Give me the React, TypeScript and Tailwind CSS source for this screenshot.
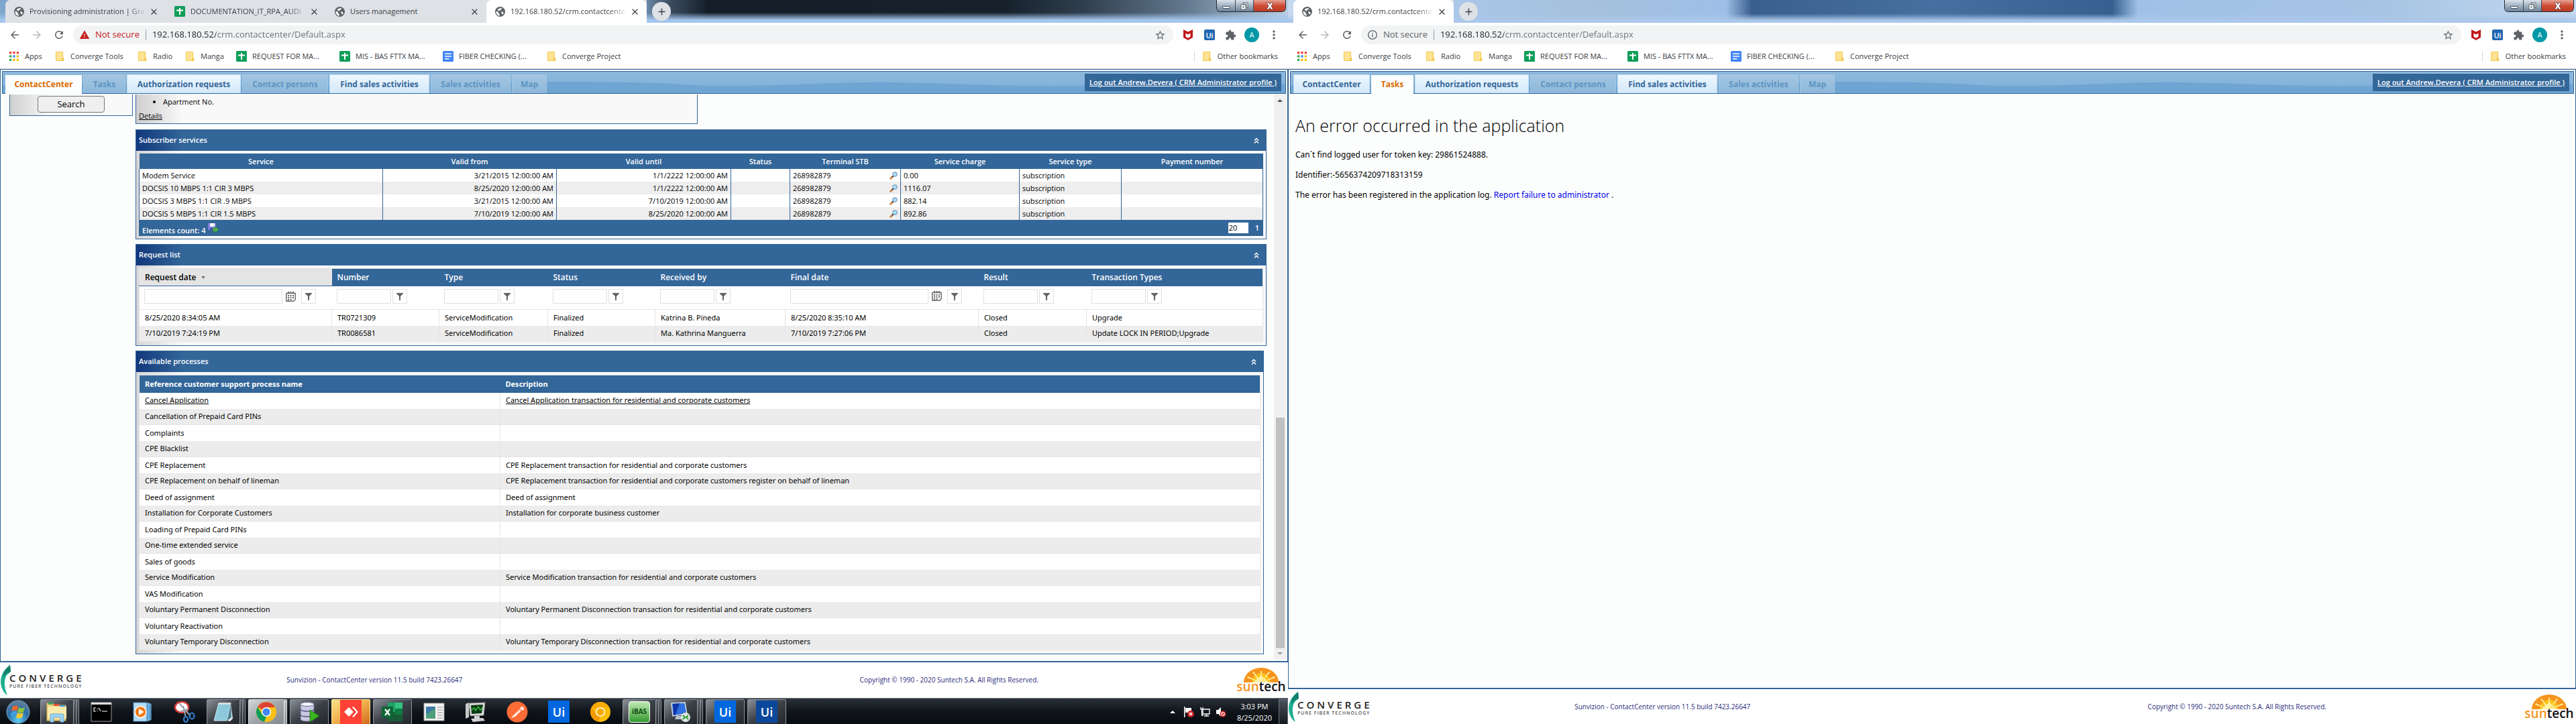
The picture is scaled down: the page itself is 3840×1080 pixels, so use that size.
import type { ReactNode } from "react";

/* ---------- icons ---------- */

type IconProps = { className?: string };

const Svg = ({ className = "", box = "0 0 24 24", children }: IconProps & { box?: string; children: ReactNode }) => (
  <svg viewBox={box} className={`shrink-0 ${className}`} aria-hidden="true">
    {children}
  </svg>
);

const GlobeIcon = ({ className }: IconProps) => (
  <Svg className={className} box="2 2 20 20">
    <circle cx="12" cy="12" r="10" fill="#5f6368" />
    <path
      fill="#fff"
      d="M4.500 10.500L9 13v2.500l2 1.500v3.200C7 19.500 4 16.300 4 12.300zM9.500 5.500L15 4.500l.5 2-2.500 1.300-1 2.200H8.500L7 8zM14 11.500l3 .5 2 2.500-1.500 2.700L15.500 16z"
    />
  </Svg>
);

const SheetsIcon = ({ className }: IconProps) => (
  <Svg className={className} box="0 0 16 16">
    <rect width="16" height="16" rx="1.5" fill="#0f9d58" />
    <path fill="#fff" d="M7 3h2v2.500h4v2H9V13H7V7.500H3v-2h4z" />
  </Svg>
);

const DocsIcon = ({ className }: IconProps) => (
  <Svg className={className} box="0 0 16 16">
    <rect width="16" height="16" rx="1.5" fill="#4285f4" />
    <path fill="#fff" d="M3 3.500h10v1.500H3zM3 7.200h10v1.500H3zM3 11h6.500v1.500H3z" />
  </Svg>
);

const FolderIcon = ({ className }: IconProps) => (
  <Svg className={className} box="0 0 16 16">
    <path d="M2.500 1.500h10v8.500l1.200.8v3.700H2.500z" fill="#ffe394" stroke="#f2c94c" />
    <path d="M11.500 14.500v-4l1-1 1.200 1.300v3.700z" fill="#ffd75e" stroke="#e8b83a" strokeWidth=".7" />
  </Svg>
);

const AppsIcon = ({ className }: IconProps) => (
  <Svg className={className} box="0 0 13 13">
    {["#ea4335", "#ea4335", "#ea4335", "#34a853", "#4285f4", "#fbbc04", "#34a853", "#fbbc04", "#fbbc04"].map((c, i) => (
      <rect key={i} x={(i % 3) * 5} y={Math.floor(i / 3) * 5} width="3" height="3" fill={c} />
    ))}
  </Svg>
);

const Path = ({ className, d }: IconProps & { d: string }) => (
  <Svg className={className}>
    <path fill="currentColor" d={d} />
  </Svg>
);

const BACK = "M20 11H7.83l5.59-5.59L12 4l-8 8 8 8 1.41-1.41L7.83 13H20v-2z";
const FORWARD = "M12 4l-1.41 1.41L16.17 11H4v2h12.17l-5.58 5.59L12 20l8-8z";
const RELOAD =
  "M17.65 6.35C16.2 4.9 14.21 4 12 4c-4.42 0-7.99 3.58-7.99 8s3.57 8 7.99 8c3.73 0 6.84-2.55 7.73-6h-2.08c-.82 2.33-3.04 4-5.65 4-3.31 0-6-2.69-6-6s2.69-6 6-6c1.66 0 3.14.69 4.22 1.78L13 11h7V4l-2.35 2.35z";
const STAR =
  "M22 9.24l-7.19-.62L12 2 9.19 8.63 2 9.24l5.46 4.73L5.82 21 12 17.27 18.18 21l-1.63-7.03L22 9.24zM12 15.4l-3.76 2.27 1-4.28-3.32-2.88 4.38-.38L12 6.1l1.71 4.04 4.38.38-3.32 2.88 1 4.28L12 15.4z";
const PUZZLE =
  "M20.5 11H19V7c0-1.1-.9-2-2-2h-4V3.5C13 2.12 11.88 1 10.5 1S8 2.12 8 3.5V5H4c-1.1 0-1.99.9-1.99 2v3.8H3.5c1.49 0 2.7 1.21 2.7 2.7s-1.21 2.7-2.7 2.7H2V20c0 1.1.9 2 2 2h3.8v-1.5c0-1.49 1.21-2.7 2.7-2.7 1.49 0 2.7 1.21 2.7 2.7V22H17c1.1 0 2-.9 2-2v-4h1.5c1.38 0 2.5-1.12 2.5-2.5S21.88 11 20.5 11z";
const WARNING = "M1 21h22L12 2 1 21zm12-3h-2v-2h2v2zm0-4h-2v-4h2v4z";
const DOTS =
  "M12 8c1.1 0 2-.9 2-2s-.9-2-2-2-2 .9-2 2 .9 2 2 2zm0 2c-1.100 0-2 .9-2 2s.9 2 2 2 2-.9 2-2-.9-2-2-2zm0 6c-1.100 0-2 .9-2 2s.9 2 2 2 2-.9 2-2-.9-2-2-2z";
const CLOSE = "M19 6.41L17.59 5 12 10.590 6.41 5 5 6.410 10.590 12 5 17.590 6.410 19 12 13.410 17.590 19 19 17.590 13.410 12z";
const PLUS = "M19 13h-6v6h-2v-6H5v-2h6V5h2v6h6v2z";

const InfoIcon = ({ className }: IconProps) => (
  <Svg className={className}>
    <circle cx="12" cy="12" r="9.500" fill="none" stroke="currentColor" strokeWidth="2" />
    <path fill="currentColor" d="M11 10.500h2V17h-2zM11 7h2v2h-2z" />
  </Svg>
);

const ShieldIcon = ({ className }: IconProps) => (
  <Svg className={className} box="0 0 14 16">
    <path fill="#c01818" d="M0 0l7 3.600L14 0v12l-7 4-7-4zM3.500 5.500v5.300L7 12.700l3.500-1.900V5.500L7 7.400z" />
  </Svg>
);

const UiTile = ({ className = "", size }: { className?: string; size: string }) => (
  <span className={`flex shrink-0 items-center justify-center font-semibold leading-none text-white ${className} ${size}`}>Ui</span>
);

const ChevronsUp = ({ className }: IconProps) => (
  <Svg className={className} box="0 0 8 9">
    <path d="M1 4.500l3-3 3 3M1 8.500l3-3 3 3" fill="none" stroke="#fff" strokeWidth="1.500" />
  </Svg>
);

const FunnelIcon = ({ className }: IconProps) => (
  <Svg className={className} box="0 0 10 12">
    <path d="M0 1h10v1L6 6v6H4V6L0 2z" fill="#656565" />
  </Svg>
);

const CalendarIcon = ({ className }: IconProps) => (
  <Svg className={className} box="0 0 15 15">
    <path d="M.8 2.500h13.400v9.200l-2.500 2.500H.8z" fill="#fff" stroke="#656565" strokeWidth="1.400" />
    <path d="M3 0h2v3H3zM6.500 0h2v3h-2zM10 0h2v3h-2z" fill="#656565" />
    <path d="M3 5h2v2H3zM6.500 5h2v2h-2zM10 5h2v2h-2zM3 8h2v2H3zM6.500 8h2v2h-2zM10 8h2v2h-2zM3 11h2v2H3zM6.500 11h2v2h-2z" fill="#656565" />
  </Svg>
);

const MagnifierIcon = ({ className }: IconProps) => (
  <Svg className={className} box="0 0 12 12">
    <path d="M1 11l4.500-4.500" stroke="#333" strokeWidth="2.400" />
    <path d="M1 11l3-3" stroke="#e8832a" strokeWidth="2" />
    <circle cx="8" cy="4" r="3.200" fill="#a9e0f7" stroke="#7d9cc4" strokeWidth="1.200" />
  </Svg>
);

const ExportIcon = ({ className }: IconProps) => (
  <Svg className={className} box="0 0 16 16">
    <path d="M0 1h12v10H0z" fill="#7d7fe0" />
    <path d="M3 1h7v5H3z" fill="#fff" />
    <path d="M3 8h6v3H3z" fill="#4b4db5" />
    <path d="M7 8h4V5.500l5 5-5 5V13H7z" fill="#4caf50" stroke="#2c7a30" strokeWidth=".6" />
  </Svg>
);

/* ---------- browser chrome ---------- */

type TabInfo = { icon: "globe" | "sheets"; title: string; fades: boolean };

const BrowserTab = ({ tab, active, first }: { tab: TabInfo; active: boolean; first: boolean }) => (
  <div
    className={`flex h-[34px] w-[239px] items-center pr-[10px] pl-[13px] ${active ? "rounded-t-lg bg-white" : "bg-[#dee1e6]"} ${first && !active ? "rounded-tl-lg" : ""}`}
  >
    {tab.icon === "globe" ? <GlobeIcon className="size-[15px]" /> : <SheetsIcon className="size-4" />}
    <button
      type="button"
      className={`ml-2 min-w-0 flex-1 whitespace-nowrap text-left text-[11px] text-[#3c4043] ${tab.fades ? "mask-r-from-85% mask-r-to-100%" : ""}`}
    >
      {tab.title}
    </button>
    <button type="button" aria-label="Close tab" className="ml-1 text-[#3c4043]">
      <Path className="size-[15px]" d={CLOSE} />
    </button>
  </div>
);

const WindowButtons = () => (
  <div className="mr-[3px] flex h-[18px] self-start overflow-hidden rounded-b-md border border-t-0 border-[#20303f] text-white">
    <button type="button" aria-label="Minimize" className="flex w-7 items-end justify-center border-r border-[#3a4a5a] bg-linear-to-b from-[#dbe4ee] to-[#6d8196] pb-1">
      <span className="h-1 w-3 rounded-sm border border-[#44505c] bg-white" />
    </button>
    <button type="button" aria-label="Restore" className="flex w-[27px] items-center justify-center border-r border-[#3a4a5a] bg-linear-to-b from-[#dbe4ee] to-[#6d8196]">
      <Svg className="size-3" box="0 0 12 12">
        <path d="M4 1h7v7H9V3H4zM1 4h7v7H1z" fill="#fff" stroke="#44505c" strokeWidth=".8" />
        <path d="M3.500 6.500h2v2h-2z" fill="#44505c" />
      </Svg>
    </button>
    <button type="button" aria-label="Close" className="flex w-[47px] items-center justify-center bg-linear-to-b from-[#e7a193] via-[#cf4a34] to-[#b93c26]">
      <Svg className="size-3" box="0 0 12 12">
        <path d="M1 1h3.500L6 3.500 7.500 1H11L8 6l3 5H7.500L6 8.500 4.500 11H1l3-5z" fill="#fff" stroke="#5b3a36" strokeWidth=".8" />
      </Svg>
    </button>
  </div>
);

const bookmarks: { icon: "apps" | "folder" | "sheets" | "docs"; label: string; width: string }[] = [
  { icon: "apps", label: "Apps", width: "w-7" },
  { icon: "folder", label: "Converge Tools", width: "w-[83px]" },
  { icon: "folder", label: "Radio", width: "w-[31px]" },
  { icon: "folder", label: "Manga", width: "w-[37px]" },
  { icon: "sheets", label: "REQUEST FOR MA...", width: "w-[114px]" },
  { icon: "sheets", label: "MIS - BAS FTTX MA...", width: "w-[114px]" },
  { icon: "docs", label: "FIBER CHECKING (...", width: "w-[114px]" },
  { icon: "folder", label: "Converge Project", width: "w-[98px]" },
];

const bookmarkIcons = {
  apps: <AppsIcon className="mx-px size-[14px]" />,
  folder: <FolderIcon className="size-4" />,
  sheets: <SheetsIcon className="size-4" />,
  docs: <DocsIcon className="size-4" />,
};

const BrowserBars = ({ alert }: { alert: boolean }) => (
  <>
    <div className="flex h-8 items-center bg-white pt-1 pr-[11px] pl-[13px]">
      <div className="flex gap-[15px] text-[#5f6368]">
        <button type="button" aria-label="Back">
          <Path className="size-[18px]" d={BACK} />
        </button>
        <button type="button" aria-label="Forward" className="text-[#bababa]">
          <Path className="size-[18px]" d={FORWARD} />
        </button>
        <button type="button" aria-label="Reload">
          <Path className="size-[18px]" d={RELOAD} />
        </button>
      </div>
      <form className="ml-3 flex h-7 flex-1 items-center rounded-full bg-[#f1f3f4] pr-[11px] pl-[9px] text-[13px]" onSubmit={(e) => e.preventDefault()}>
        <span className={`flex items-center gap-2 ${alert ? "text-[#c5221f]" : "text-[#5f6368]"}`}>
          {alert ? <Path className="size-4" d={WARNING} /> : <InfoIcon className="size-4" />}
          Not secure
        </span>
        <span className="mx-[9px] h-4 w-px bg-[#9aa0a6]" />
        <input
          aria-label="Address"
          defaultValue="192.168.180.52/crm.contactcenter/Default.aspx"
          className="min-w-0 flex-1 bg-[linear-gradient(90deg,#202124_95px,#6a6e73_95px)] bg-clip-text text-transparent outline-none"
        />
        <button type="button" aria-label="Bookmark this page" className="text-[#5f6368]">
          <Path className="size-[17px]" d={STAR} />
        </button>
      </form>
      <div className="ml-[13px] flex items-center">
        <button type="button" aria-label="McAfee" className="mr-4 pl-px">
          <ShieldIcon className="size-4" />
        </button>
        <button type="button" aria-label="UiPath" className="mr-[15px]">
          <UiTile className="rounded-xs bg-[#1f66b1] text-[11px]" size="size-4" />
        </button>
        <button type="button" aria-label="Extensions" className="mr-3 text-[#5f6368]">
          <Path className="size-[17px]" d={PUZZLE} />
        </button>
        <button type="button" aria-label="Profile" className="flex size-[22px] items-center justify-center rounded-full bg-[#0097a7] text-[11px] text-white">
          A
        </button>
        <button type="button" aria-label="Menu" className="ml-3 text-[#5f6368]">
          <Path className="size-5" d={DOTS} />
        </button>
      </div>
    </div>
    <nav aria-label="Bookmarks" className="flex h-[37px] items-center border-b border-[#d4d6da] bg-white pr-[15px] pl-[13px] text-[11px] text-[#3c4043]">
      <div className="flex flex-1 gap-4">
        {bookmarks.map((b) => (
          <a key={b.label} href="#" className="flex items-center gap-2 whitespace-nowrap">
            {bookmarkIcons[b.icon]}
            <span className={b.width}>{b.label}</span>
          </a>
        ))}
      </div>
      <span className="mr-[10px] h-4 w-px bg-[#d4d6da]" />
      <a href="#" className="flex items-center gap-2 whitespace-nowrap">
        <FolderIcon className="size-4" />
        Other bookmarks
      </a>
    </nav>
  </>
);

/* ---------- CRM page parts ---------- */

const crmTabs = [
  { label: "ContactCenter", width: "w-[114px]", always: true },
  { label: "Tasks", width: "w-[63px]", always: false },
  { label: "Authorization requests", width: "w-[170px]", always: true },
  { label: "Contact persons", width: "w-[128px]", always: false },
  { label: "Find sales activities", width: "w-[149px]", always: true },
  { label: "Sales activities", width: "w-[119px]", always: false },
  { label: "Map", width: "w-[52px]", always: false },
];

const CrmHeader = ({ current }: { current: string }) => (
  <div className="relative flex h-[34px] items-end justify-between border border-[#336699] bg-linear-to-b from-[#8cb8dc] to-[#80b0d8] pl-1">
    <svg viewBox="0 0 1914 32" preserveAspectRatio="none" className="absolute inset-0 size-full" aria-hidden="true">
      <path d="M0 20C150 14 300 22 450 22S650 14 850 15 1000 22 1100 21 1250 15 1330 16 1480 22 1600 21 1800 17 1914 18V32H0z" fill="#6ea5d3" />
    </svg>
    <div className="relative flex items-end gap-[2px]">
      {crmTabs.map((t) => {
        const look =
          t.label === current
            ? "-mb-px h-[28px] bg-[#fcfefe] text-[#dd6b00]"
            : t.always
              ? "h-[28px] border border-b-0 border-[#c4dcf0] bg-linear-to-b from-[#eef7fe] to-[#d3e8f9] text-[#336699]"
              : "h-[28px] border border-b-0 border-[#a4c6e2] bg-linear-to-b from-[#a2c5e1] to-[#8db8db] text-[#5e95c0]";
        return (
          <button key={t.label} type="button" className={`${t.width} ${look} whitespace-nowrap text-center text-[12px] font-bold`}>
            {t.label}
          </button>
        );
      })}
    </div>
    <a href="#" className="relative mr-[6px] mb-[3px] flex h-[26px] items-center bg-[#336699] px-[7px] text-[11px] font-semibold whitespace-nowrap text-white underline">
      Log out Andrew.Devera ( CRM Administrator profile )
    </a>
  </div>
);

const ConvergeLogo = () => (
  <div className="flex h-[46px] w-[130px] items-end" role="img" aria-label="Converge Pure Fiber Technology">
    <Svg className="h-[46px] w-[18px]" box="0 0 18 46">
      <path d="M15 0C3 8-1 21 2 32c2 6 5 11 9 13C6 34 5 21 11 14c2-2 4-3 5-4z" fill="#1fae8f" />
      <path d="M15 0C8 6 5 12 4 19c3-5 8-8 12-9z" fill="#15806b" />
    </Svg>
    <div className="-ml-1 flex flex-col pb-[10px] whitespace-nowrap">
      <span className="text-[15px] leading-[15px] font-semibold tracking-[4px] text-[#222]">CONVERGE</span>
      <span className="text-[7px] leading-[9px] font-semibold tracking-[1px] text-[#555]">PURE FIBER TECHNOLOGY</span>
    </div>
  </div>
);

const SuntechLogo = () => (
  <div className="flex w-[74px] flex-col items-center" role="img" aria-label="suntech">
    <Svg className="h-[22px] w-[52px]" box="0 0 52 22">
      <path d="M0 22a26 22 0 0 1 52 0z" fill="#f7941d" />
      <path d="M12 22a14 14 0 0 1 28 0z" fill="#fdc21a" />
      <path
        d="M26 22l-1-17 2 0zM26 22L13 7l2-1zM26 22L39 7l-2-1zM26 22L5 15l1-2zM26 22l21-7-1-2zM14 22l6-5-2-4 5 2 3-5 3 5 5-2-2 4 6 5z"
        fill="#fff3a8"
      />
    </Svg>
    <span className="-mt-1 text-[19px] leading-[20px] font-semibold">
      <span className="text-[#f7941d]">sun</span>
      <span className="text-[#111]">tech</span>
    </span>
  </div>
);

const CrmFooter = () => (
  <footer className="flex h-[53px] items-center bg-white text-[10px] text-[#2c2c7c]">
    <ConvergeLogo />
    <p className="flex-1 text-center">Sunvizion - ContactCenter version 11.5 build 7423.26647</p>
    <p className="flex-1 text-center">Copyright © 1990 - 2020 Suntech S.A. All Rights Reserved.</p>
    <div className="mr-[3px]">
      <SuntechLogo />
    </div>
  </footer>
);

const Panel = ({ title, className = "", children }: { title: string; className?: string; children: ReactNode }) => (
  <section className={`border border-[#336699] bg-[linear-gradient(90deg,#d6d6d6,#f8f8f8_70px)] ${className}`}>
    <header className="flex h-[31px] items-center justify-between bg-[linear-gradient(90deg,#12387c,#336699_70px)] pr-[10px] pl-1">
      <h2 className="text-[11px] font-semibold text-white">{title}</h2>
      <button type="button" aria-label={`Collapse ${title}`}>
        <ChevronsUp className="h-[9px] w-2" />
      </button>
    </header>
    {children}
  </section>
);

const services = [
  ["Modem Service", "3/21/2015 12:00:00 AM", "1/1/2222 12:00:00 AM", "0.00"],
  ["DOCSIS 10 MBPS 1:1 CIR 3 MBPS", "8/25/2020 12:00:00 AM", "1/1/2222 12:00:00 AM", "1116.07"],
  ["DOCSIS 3 MBPS 1:1 CIR .9 MBPS", "3/21/2015 12:00:00 AM", "7/10/2019 12:00:00 AM", "882.14"],
  ["DOCSIS 5 MBPS 1:1 CIR 1.5 MBPS", "7/10/2019 12:00:00 AM", "8/25/2020 12:00:00 AM", "892.86"],
];

const ServicesTable = () => (
  <div className="p-1">
    <table className="w-full table-fixed text-[11px] leading-[19px]">
      <colgroup>
        <col className="w-[363px]" />
        <col className="w-[259px]" />
        <col className="w-[260px]" />
        <col className="w-[88px]" />
        <col className="w-[165px]" />
        <col className="w-[177px]" />
        <col className="w-[152px]" />
        <col />
      </colgroup>
      <thead>
        <tr className="h-[23px] bg-[#336699] text-white">
          {["Service", "Valid from", "Valid until", "Status", "Terminal STB", "Service charge", "Service type", "Payment number"].map((h) => (
            <th key={h} scope="col" className="p-0 text-center font-semibold">
              {h}
            </th>
          ))}
        </tr>
      </thead>
      <tbody className="border-x border-[#336699]">
        {services.map(([name, from, until, charge]) => (
          <tr key={name} className="h-[19px] divide-x divide-[#336699] bg-white text-black even:bg-[#eeeeee]">
            <td className="px-1 py-0">{name}</td>
            <td className="px-1 py-0 text-right">{from}</td>
            <td className="px-1 py-0 text-right">{until}</td>
            <td />
            <td className="px-1 py-0">
              <span className="flex items-center justify-between">
                268982879
                <button type="button" aria-label="Show terminal">
                  <MagnifierIcon className="size-3" />
                </button>
              </span>
            </td>
            <td className="px-1 py-0">{charge}</td>
            <td className="px-1 py-0">subscription</td>
            <td />
          </tr>
        ))}
      </tbody>
    </table>
    <div className="flex h-6 items-center bg-[#336699] pr-[6px] pl-[5px] text-[11px] text-white">
      <span className="flex flex-1 items-center gap-[3px] font-semibold">
        <span className="pt-2">Elements count: 4</span>
        <button type="button" aria-label="Export">
          <ExportIcon className="size-4" />
        </button>
      </span>
      <input aria-label="Page size" defaultValue="20" className="h-4 w-[30px] bg-white px-px text-black" />
      <span className="ml-[10px] font-semibold">1</span>
    </div>
  </div>
);

const requestColumns = [
  { label: "Request date", width: "w-[287px]", date: true },
  { label: "Number", width: "w-[160px]", date: false },
  { label: "Type", width: "w-[162px]", date: false },
  { label: "Status", width: "w-[160px]", date: false },
  { label: "Received by", width: "w-[194px]", date: false },
  { label: "Final date", width: "w-[288px]", date: true },
  { label: "Result", width: "w-[161px]", date: false },
  { label: "Transaction Types", width: "", date: false },
];

const requests = [
  ["8/25/2020 8:34:05 AM", "TR0721309", "ServiceModification", "Finalized", "Katrina B. Pineda", "8/25/2020 8:35:10 AM", "Closed", "Upgrade"],
  ["7/10/2019 7:24:19 PM", "TR0086581", "ServiceModification", "Finalized", "Ma. Kathrina Manguerra", "7/10/2019 7:27:06 PM", "Closed", "Update LOCK IN PERIOD;Upgrade"],
];

const RequestTable = () => (
  <div className="px-1 pt-1 pb-[5px] font-['Noto_Sans','Open_Sans',sans-serif]">
    <table className="w-full table-fixed border border-[#e4e4e4] bg-white text-left text-[11px] text-black">
      <colgroup>
        {requestColumns.map((c) => (
          <col key={c.label} className={c.width} />
        ))}
      </colgroup>
      <thead>
        <tr className="h-[26px] bg-[#336699] font-['Open_Sans','Noto_Sans',sans-serif] text-[12px] text-white">
          {requestColumns.map((c, i) => (
            <th key={c.label} scope="col" className={`px-2 py-0 font-semibold ${i === 0 ? "border-b border-[#336699] bg-[#e4e4e4] text-black" : ""}`}>
              {c.label}
              {i === 0 && (
                <svg viewBox="0 0 6 4" className="ml-2 inline h-1 w-[6px]" aria-hidden="true">
                  <path d="M0 0h6L3 4z" fill="#777" />
                </svg>
              )}
            </th>
          ))}
        </tr>
        <tr className="h-[35px] border-b border-[#e4e4e4]">
          {requestColumns.map((c) => (
            <td key={c.label} className="px-[7px] pt-0 pb-1">
              <span className="flex items-center gap-[2px]">
                <input aria-label={`Filter ${c.label}`} className={`h-[22px] border border-[#e0e0e0] bg-white ${c.date ? "w-[206px]" : "w-[81px]"}`} />
                {c.date && (
                  <button type="button" aria-label={`Pick ${c.label}`} className="mr-[6px] ml-[3px]">
                    <CalendarIcon className="size-[15px]" />
                  </button>
                )}
                <button type="button" aria-label={`Filter options for ${c.label}`} className="flex h-[22px] w-[22px] items-center justify-center border border-[#e0e0e0] bg-white">
                  <FunnelIcon className="h-3 w-[10px]" />
                </button>
              </span>
            </td>
          ))}
        </tr>
      </thead>
      <tbody>
        {requests.map((row) => (
          <tr key={row[1]} className="h-6 divide-x divide-[#e4e4e4] even:bg-[#ececec]">
            {row.map((cell, i) => (
              <td key={i} className="px-2 py-0 whitespace-nowrap">
                {cell}
              </td>
            ))}
          </tr>
        ))}
      </tbody>
    </table>
  </div>
);

const processes: [string, string][] = [
  ["Cancel Application", "Cancel Application transaction for residential and corporate customers"],
  ["Cancellation of Prepaid Card PINs", ""],
  ["Complaints", ""],
  ["CPE Blacklist", ""],
  ["CPE Replacement", "CPE Replacement transaction for residential and corporate customers"],
  ["CPE Replacement on behalf of lineman", "CPE Replacement transaction for residential and corporate customers register on behalf of lineman"],
  ["Deed of assignment", "Deed of assignment"],
  ["Installation for Corporate Customers", "Installation for corporate business customer"],
  ["Loading of Prepaid Card PINs", ""],
  ["One-time extended service", ""],
  ["Sales of goods", ""],
  ["Service Modification", "Service Modification transaction for residential and corporate customers"],
  ["VAS Modification", ""],
  ["Voluntary Permanent Disconnection", "Voluntary Permanent Disconnection transaction for residential and corporate customers"],
  ["Voluntary Reactivation", ""],
  ["Voluntary Temporary Disconnection", "Voluntary Temporary Disconnection transaction for residential and corporate customers"],
];

const ProcessTable = () => (
  <div className="px-1 pt-1 pb-[5px] font-['Noto_Sans','Open_Sans',sans-serif]">
    <table className="w-full table-fixed border border-[#e4e4e4] bg-white text-left text-[11px] text-black">
      <colgroup>
        <col className="w-[538px]" />
        <col />
      </colgroup>
      <thead>
        <tr className="h-[26px] bg-[#336699] text-white">
          <th scope="col" className="px-2 py-0 font-bold">Reference customer support process name</th>
          <th scope="col" className="px-2 py-0 font-bold">Description</th>
        </tr>
      </thead>
      <tbody>
        {processes.map(([name, description], i) => (
          <tr key={name} className="h-6 divide-x divide-[#e4e4e4] even:border-b even:border-[#e4e4e4] even:bg-[#ececec]">
            <td className="px-2 py-0">{i === 0 ? <a href="#" className="underline">{name}</a> : name}</td>
            <td className="px-2 py-0">{i === 0 ? <a href="#" className="underline">{description}</a> : description}</td>
          </tr>
        ))}
      </tbody>
    </table>
  </div>
);

const Scrollbar = () => (
  <div className="flex w-[18px] flex-col items-center bg-[#f0f0f0] py-[7px]" aria-hidden="true">
    <svg viewBox="0 0 8 4" className="h-1 w-2">
      <path d="M0 4h8L4 0z" fill="#505050" />
    </svg>
    <div className="flex-[470]" />
    <div className="w-[13px] flex-[344] bg-[#c1c1c1]" />
    <svg viewBox="0 0 8 4" className="mt-[6px] h-1 w-2">
      <path d="M0 0h8L4 4z" fill="#a3a3a3" />
    </svg>
  </div>
);

const ContactCenter = () => (
  <div className="flex flex-1">
    <aside className="ml-[11px] w-[184px]">
      <div className="flex h-8 justify-center border border-t-0 border-[#336699] bg-[linear-gradient(90deg,#cfcfcf,#f9f9f9_60px)] pt-[2px]">
        <button type="button" className="h-[25px] w-[100px] rounded-sm border border-[#767676] bg-[#efefef] text-[13px] text-black">
          Search
        </button>
      </div>
    </aside>
    <main className="mr-[11px] ml-1 flex flex-1 flex-col">
      <div className="flex h-[44px] w-[838px] flex-col border border-t-0 border-[#336699] bg-[linear-gradient(90deg,#cfcfcf,#f9f9f9_70px)] pl-1 text-[11px] text-black">
        <ul className="list-disc pl-[36px] leading-[22px]">
          <li>Apartment No.</li>
        </ul>
        <a href="#" className="self-start leading-[20px] underline">
          Details
        </a>
      </div>
      <Panel title="Subscriber services" className="mt-2">
        <ServicesTable />
      </Panel>
      <Panel title="Request list" className="mt-[7px]">
        <RequestTable />
      </Panel>
      <Panel title="Available processes" className="mt-[7px] mr-1">
        <ProcessTable />
      </Panel>
      <div className="h-2" />
    </main>
    <Scrollbar />
  </div>
);

const ErrorPage = () => (
  <main className="flex-1 pt-[27px] pl-2 font-['Noto_Sans','Open_Sans',sans-serif] text-black">
    <h1 className="font-['Open_Sans','Noto_Sans',sans-serif] text-[25px] leading-[38px] font-light">An error occurred in the application</h1>
    <div className="mt-[15px] space-y-[10px] text-[12px] leading-5">
      <p>Can`t find logged user for token key: 29861524888.</p>
      <p>Identifier:-5656374209718313159</p>
      <p>
        The error has been registered in the application log.{" "}
        <a href="#" className="text-[#0000ee]">
          Report failure to administrator
        </a>{" "}
        .
      </p>
    </div>
  </main>
);

/* ---------- browser window ---------- */

const BrowserWindow = ({
  tabs,
  active,
  titleBar,
  alert,
  current,
  children,
}: {
  tabs: TabInfo[];
  active: number;
  titleBar: string;
  alert: boolean;
  current: string;
  children: ReactNode;
}) => (
  <div className="flex flex-1 flex-col">
    <div className={`flex h-[34px] items-center pl-2 ${titleBar}`}>
      {tabs.map((t, i) => (
        <div key={i} className="flex items-center bg-[#dee1e6] first:rounded-tl-lg only:bg-transparent last:rounded-tr-lg">
          {i > 0 && i < active && <span className="-mr-px h-5 w-px bg-[#808489]" />}
          <BrowserTab tab={t} active={i === active} first={i === 0} />
        </div>
      ))}
      <button type="button" aria-label="New tab" className="ml-2 flex size-7 items-center justify-center rounded-full bg-[#dee1e6] text-[#3c4043]">
        <Path className="size-[17px]" d={PLUS} />
      </button>
      <div className="flex-1" />
      <WindowButtons />
    </div>
    <BrowserBars alert={alert} />
    <div className="flex flex-1 flex-col border border-b-2 border-[#336699] bg-[#fcfefe]">
      <div className="flex flex-1 flex-col px-[2px] pt-[2px]">
        <CrmHeader current={current} />
        <div className="flex flex-1 flex-col pt-px pb-[2px]">{children}</div>
      </div>
    </div>
    <CrmFooter />
  </div>
);

/* ---------- taskbar ---------- */

const ChromeIcon = ({ gold = false }: { gold?: boolean }) => (
  <Svg className="size-8" box="0 0 32 32">
    <circle cx="16" cy="16" r="15" fill={gold ? "#fbbc04" : "#fbc116"} />
    <path d="M16 16L3 8.500A15 15 0 0 1 29 9H16z" fill={gold ? "#f9ab00" : "#db4437"} />
    <path d="M3 8.500L10 20l6 3-3 7.700A15 15 0 0 1 3 8.500z" fill={gold ? "#f29900" : "#0f9d58"} />
    <circle cx="16" cy="16" r="7" fill="#fff" />
    <circle cx="16" cy="16" r="5.500" fill={gold ? "#f9ab00" : "#4285f4"} />
  </Svg>
);

type Task = { name: string; look: "flat" | "open" | "light" | "gold"; stack?: number; art: ReactNode };

const taskIcons: Task[] = [
  {
    name: "Explorer",
    look: "open",
    stack: 2,
    art: (
      <Svg className="size-8" box="0 0 32 32">
        <path d="M1 3h9l2 3h17v23H1z" fill="#f3d27a" stroke="#d9b65a" />
        <path d="M3 2h7v3H3z" fill="#3ba55d" />
        <path d="M11 4h8v3h-8z" fill="#e0503a" />
        <path d="M20 6h8v3h-8z" fill="#2e9be0" />
        <path d="M2 8h28v18H2z" fill="#fbe9ae" />
        <path d="M6 31V21q0-2 2-2h16q2 0 2 2v10h-5v-7H11v7z" fill="#9fd3f2" stroke="#62a9d8" />
      </Svg>
    ),
  },
  {
    name: "Command Prompt",
    look: "flat",
    art: (
      <Svg className="size-8" box="0 0 32 32">
        <path d="M1 2h30v28H1z" fill="#000" stroke="#999" />
        <path d="M1 2h30v3H1z" fill="#ddd" />
        <path d="M8 10H5v5h3M10 11v1M10 14v1M12 10l3 5M17 15h8" fill="none" stroke="#fff" strokeWidth="1.200" />
      </Svg>
    ),
  },
  {
    name: "Media Player",
    look: "flat",
    art: (
      <Svg className="size-8" box="0 0 32 32">
        <path d="M7 4h21v24H7z" fill="#3d87c2" stroke="#7fbde8" />
        <path d="M5 3h20v26H5z" fill="#5fa4d8" stroke="#9ccdee" />
        <path d="M2 2h20v28H2z" fill="#b4dcf5" stroke="#4788b8" />
        <circle cx="12.500" cy="16" r="8.500" fill="#f47a16" stroke="#fff" strokeWidth="1.500" />
        <path d="M10 11l7.500 5-7.500 5z" fill="#fff" />
      </Svg>
    ),
  },
  {
    name: "Snipping Tool",
    look: "flat",
    art: (
      <Svg className="size-8" box="0 0 32 32">
        <ellipse cx="12" cy="9" rx="10" ry="8" fill="#fff" stroke="#d83a3a" strokeWidth="2.500" />
        <path d="M8 3l17 19M10 15l12-3M14 7l4 17" stroke="#9aa4ae" strokeWidth="2" />
        <ellipse cx="27" cy="22" rx="3.500" ry="4.500" fill="none" stroke="#2f7fd0" strokeWidth="2.200" />
        <ellipse cx="18" cy="27" rx="3" ry="4" fill="none" stroke="#2f7fd0" strokeWidth="2.200" />
      </Svg>
    ),
  },
  {
    name: "Notepad",
    look: "open",
    stack: 2,
    art: (
      <Svg className="size-8" box="0 0 32 32">
        <path d="M9 3h18l-6 26H2z" fill="#8cc9dc" stroke="#c8e6ef" />
        <path d="M9 2h18v3H8z" fill="#d8dcdf" />
        <path d="M22 29l5-25 3 22-4 4z" fill="#e3e9ec" />
        <path d="M22 29l5-25 1 20z" fill="#4a8196" />
      </Svg>
    ),
  },
  { name: "Chrome", look: "light", stack: 1, art: <ChromeIcon /> },
  {
    name: "SQL Developer",
    look: "open",
    art: (
      <Svg className="size-8" box="0 0 32 32">
        <path d="M3 4v23c0 4 20 4 20 0V4z" fill="#c9c9e2" stroke="#6b6b95" />
        <ellipse cx="13" cy="4.500" rx="10" ry="3" fill="#f3f3fa" stroke="#6b6b95" />
        <path d="M3 12c0 4 20 4 20 0M3 20c0 4 20 4 20 0" fill="none" stroke="#53537f" strokeWidth="1.500" />
        <path d="M17 13l14 9-14 9z" fill="#3cb51f" stroke="#136b13" strokeWidth=".8" />
      </Svg>
    ),
  },
  {
    name: "AnyDesk",
    look: "gold",
    art: (
      <Svg className="h-[36px] w-8" box="0 0 32 36">
        <path d="M0 0h32v36H0z" fill="#ff4136" />
        <path d="M13 11l7 7-7 7-7-7z" fill="#fff" />
        <path d="M18 11l2-1 7 8-7 8-2-1 6-7z" fill="#fff" />
      </Svg>
    ),
  },
  {
    name: "Excel",
    look: "open",
    art: (
      <Svg className="size-8" box="0 0 32 32">
        <path d="M9 2h22v28H9z" fill="#21a366" />
        <path d="M20 2h11v9H20z" fill="#33c481" />
        <path d="M9 16h11v14H9zM20 20h11v10H20z" fill="#185c37" />
        <path d="M20 11h11v9H20z" fill="#107c41" />
        <path d="M0 8h17v17H0z" fill="#0e6635" />
        <path d="M5 12l7 9M12 12l-7 9" stroke="#fff" strokeWidth="2.200" />
      </Svg>
    ),
  },
  {
    name: "Resource Viewer",
    look: "flat",
    art: (
      <Svg className="size-8" box="0 0 32 32">
        <path d="M1 3h30v26H1z" fill="#f4f4f4" stroke="#9a9a9a" />
        <path d="M4 8h14v18H4z" fill="#3d7aa8" />
        <path d="M4 20l14-10v16H4z" fill="#4d9e7a" />
        <path d="M21 9h8M21 13h8M21 17h8M21 21h8M21 25h8" stroke="#8a8a8a" />
      </Svg>
    ),
  },
  {
    name: "Terminal",
    look: "flat",
    art: (
      <Svg className="size-8" box="0 0 32 32">
        <path d="M1 4l5-2v22l-5 2z" fill="#c9c9c9" />
        <path d="M6 3l24-1-2 19-20 1z" fill="#dedede" stroke="#8b8b8b" />
        <path d="M9 6l18-1-2 13-15 1z" fill="#0b3a12" />
        <path d="M10 13l4-3 2 4 4-6 3 5 3-3" fill="none" stroke="#3be04c" strokeWidth="1.200" />
        <path d="M14 22h8v4h-8zM9 26l18-1 3 4-18 2z" fill="#d2d2d2" />
      </Svg>
    ),
  },
  {
    name: "Postman",
    look: "flat",
    art: (
      <Svg className="size-8" box="0 0 32 32">
        <circle cx="16" cy="16" r="15.500" fill="#ff6c37" />
        <path d="M7 25l3-4 10-9 2 2-9 9zM20 11a3 3 0 1 1 4 3z" fill="#ffe9df" />
      </Svg>
    ),
  },
  { name: "UiPath", look: "flat", art: <UiTile className="bg-[#0067df] text-[18px]" size="h-[33px] w-8" /> },
  { name: "Chrome Canary", look: "flat", art: <ChromeIcon gold /> },
  {
    name: "iBAS",
    look: "open",
    stack: 2,
    art: (
      <span className="flex size-8 items-center justify-center rounded-sm border border-white bg-linear-to-b from-[#bfeab4] to-[#2f9a2b] text-[10px] font-bold text-[#0c4a10]">
        iBAS
      </span>
    ),
  },
  {
    name: "Remote Desktop",
    look: "open",
    stack: 2,
    art: (
      <Svg className="size-8" box="0 0 32 32">
        <path d="M2 3l20-1 3 17-21 3z" fill="#2f6fe0" stroke="#d5dde8" strokeWidth="1.500" />
        <path d="M4 4l10-1-6 17-3 1z" fill="#1035a8" />
        <path d="M9 22h9l2 5H7z" fill="#b9c2cc" />
        <circle cx="23" cy="24" r="7" fill="#dfe4e0" />
        <path d="M19 21l3 3-3 3M27 21l-3 3 3 3" stroke="#279b2f" strokeWidth="1.800" fill="none" />
      </Svg>
    ),
  },
  { name: "UiPath Studio", look: "open", art: <UiTile className="bg-[#0067df] text-[18px]" size="h-[33px] w-8" /> },
  { name: "UiPath Robot", look: "open", art: <UiTile className="bg-[#0b489b] text-[18px]" size="h-[33px] w-8" /> },
];

const taskLooks = {
  flat: "border-transparent",
  open: "border-[#8f959b] bg-linear-to-br from-[#8b9198] via-[#3c4147] to-[#23272c]",
  light: "border-[#dfe2e5] bg-linear-to-br from-[#d5d8da] via-[#a2a6a9] to-[#85898c]",
  gold: "border-[#ffe9a8] bg-linear-to-br from-[#fbe28a] via-[#f0b04a] to-[#cf6a1a]",
};

const Taskbar = () => (
  <footer className="flex h-10 items-center border-t border-[#7c8794] bg-linear-to-b from-[#2a3038] via-[#10151b] to-[#080b10] text-white">
    <button type="button" aria-label="Start" className="ml-[9px]">
      <Svg className="size-9" box="0 0 36 36">
        <defs>
          <radialGradient id="orb" cx=".5" cy=".85" r=".8">
            <stop offset="0" stopColor="#5fd0f5" />
            <stop offset=".55" stopColor="#2a6ea8" />
            <stop offset="1" stopColor="#5d7f9c" />
          </radialGradient>
        </defs>
        <circle cx="18" cy="18" r="17" fill="url(#orb)" stroke="#7fa6c6" />
        <path d="M10 10c3-2 6-2 8 0l-2 7c-2-2-5-2-8 0z" fill="#f0652b" />
        <path d="M19 11c3 2 6 2 9 0l-2 7c-3 2-6 2-9 0z" fill="#8cc63f" />
        <path d="M8 18c3-2 6-2 8 0l-2 7c-2-2-5-2-8 0z" fill="#3f9fe0" />
        <path d="M17 19c3 2 6 2 9 0l-2 7c-3 2-6 2-9 0z" fill="#fdc82f" />
      </Svg>
    </button>
    <div className="ml-[15px] flex flex-1 gap-1">
      {taskIcons.map((t) => (
        <div key={t.name} className="flex h-[38px] w-[58px]">
          <button type="button" aria-label={t.name} className={`flex flex-1 items-center justify-center rounded-xs border ${taskLooks[t.look]}`}>
            {t.art}
          </button>
          {Array.from({ length: t.stack ?? 0 }, (_, i) => (
            <span key={i} className={`w-1 rounded-r-xs border border-l-0 ${taskLooks[t.look]}`} />
          ))}
        </div>
      ))}
    </div>
    <div className="flex items-center gap-2 pr-[10px]">
      <button type="button" aria-label="Show hidden icons" className="mr-1">
        <Svg className="h-1 w-2" box="0 0 8 4">
          <path d="M0 4h8L4 0z" fill="#fff" />
        </Svg>
      </button>
      <Svg className="size-4" box="0 0 16 16">
        <path d="M1 0h1.500v16H1zM3 2h9v7H3z" fill="#fff" />
        <circle cx="11" cy="11" r="5" fill="#d32020" />
        <path d="M9 9l4 4M13 9l-4 4" stroke="#fff" strokeWidth="1.400" />
      </Svg>
      <Svg className="size-4" box="0 0 16 16">
        <path d="M5 4h10v7H5zM7 14h7M10.500 11v3M2 1v3h3V1M3.500 4v9H6" fill="none" stroke="#fff" strokeWidth="1.300" />
      </Svg>
      <Svg className="size-4" box="0 0 16 16">
        <path d="M1 5h3l4-4v14l-4-4H1z" fill="#fff" />
        <circle cx="11" cy="11" r="4.500" fill="#d32020" />
        <circle cx="11" cy="11" r="2.600" fill="none" stroke="#fff" />
        <path d="M9 9l4 4" stroke="#fff" />
      </Svg>
      <div className="ml-2 text-center text-[11px] leading-[17px]">
        <p>3:03 PM</p>
        <p>8/25/2020</p>
      </div>
    </div>
    <button type="button" aria-label="Show desktop" className="h-[38px] w-[14px] border border-[#6b7580] bg-linear-to-b from-[#4c545c] to-[#15191d]" />
  </footer>
);

const leftTabs: TabInfo[] = [
  { icon: "globe", title: "Provisioning administration | Gra", fades: true },
  { icon: "sheets", title: "DOCUMENTATION_IT_RPA_AUDI", fades: true },
  { icon: "globe", title: "Users management", fades: false },
  { icon: "globe", title: "192.168.180.52/crm.contactcente", fades: true },
];

const rightTabs: TabInfo[] = [{ icon: "globe", title: "192.168.180.52/crm.contactcente", fades: true }];

export default function App() {
  return (
    <div className="flex min-h-screen bg-white font-['Open_Sans','Noto_Sans',sans-serif]">
      <div className="flex flex-1 flex-col">
        <BrowserWindow
          tabs={leftTabs}
          active={3}
          alert
          current="ContactCenter"
          titleBar="bg-[linear-gradient(180deg,transparent_55%,#a5c7ee_88%),linear-gradient(90deg,#7ea6cc,#6f8eae_50%,#3c4d60_52%,#141e29_55%,#16212c_78%,#2f3e4d_84%,#62788e_92%,#b9cde0)]"
        >
          <ContactCenter />
        </BrowserWindow>
        <Taskbar />
      </div>
      <BrowserWindow
        tabs={rightTabs}
        active={0}
        alert={false}
        current="Tasks"
        titleBar="bg-[linear-gradient(180deg,transparent_60%,#abc8ea_90%),linear-gradient(90deg,#c8daf0,#a9c6e8_14%,#a4c0dc_24%,#9dbfe8_34%,#3a5f8e_36%,#46709f_50%,#35608f_64%,#a0c1e6_66%,#a6c4e4_85%,#c5d8ef)]"
      >
        <ErrorPage />
      </BrowserWindow>
    </div>
  );
}
